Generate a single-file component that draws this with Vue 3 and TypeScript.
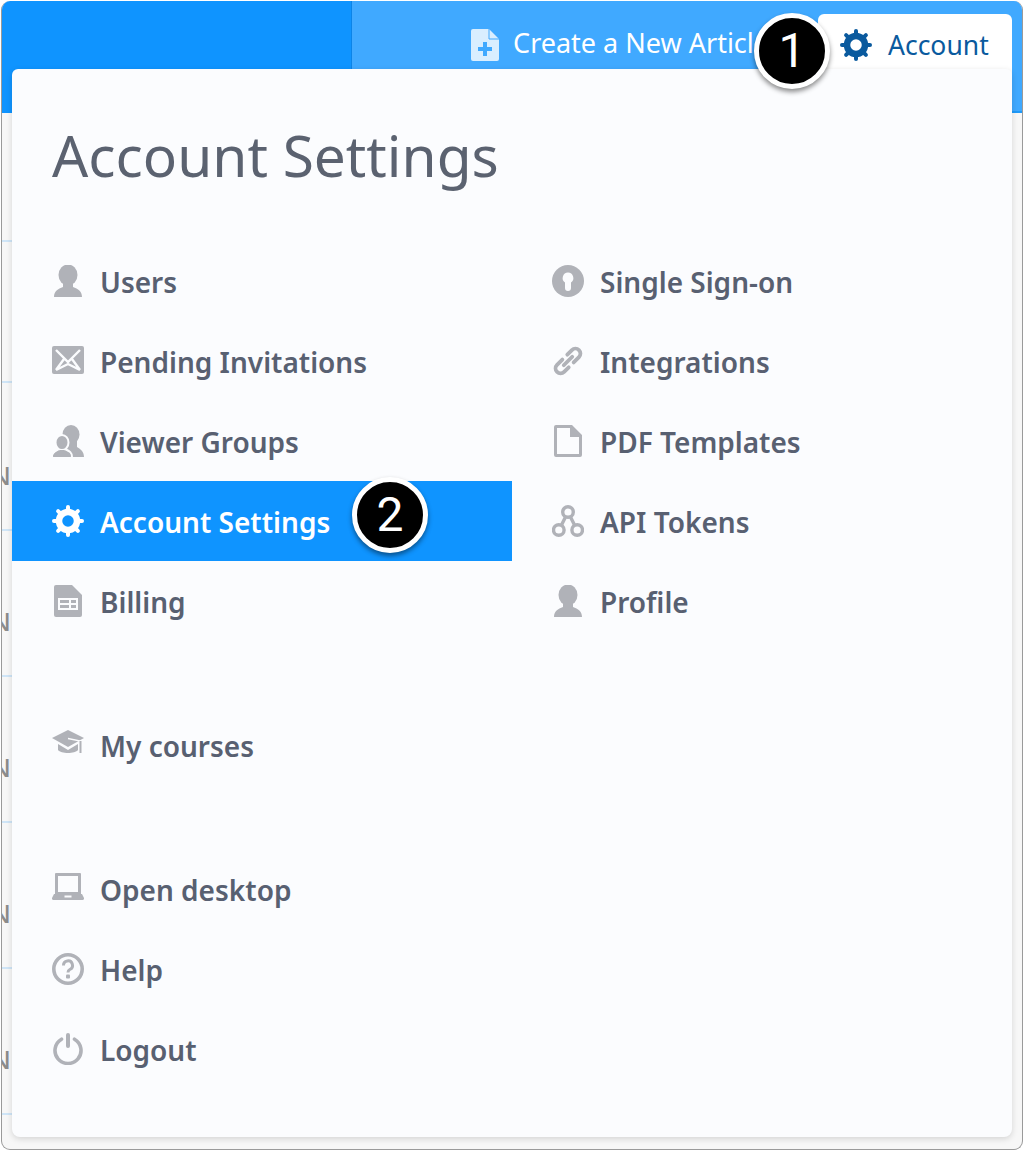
<script setup lang="ts">
interface Item { label: string; icon: string; active?: boolean }

const cut = '#fbfcfe'

function gear(): string {
  let teeth = ''
  for (let i = 0; i < 8; i++) {
    const a = (i * Math.PI) / 4
    const x1 = (16 + 11 * Math.sin(a)).toFixed(2)
    const y1 = (16 - 11 * Math.cos(a)).toFixed(2)
    const x2 = (16 + 14 * Math.sin(a)).toFixed(2)
    const y2 = (16 - 14 * Math.cos(a)).toFixed(2)
    teeth += `<line x1="${x1}" y1="${y1}" x2="${x2}" y2="${y2}" stroke="currentColor" stroke-width="4" stroke-linecap="round"/>`
  }
  return `<circle cx="16" cy="16" r="9" fill="none" stroke="currentColor" stroke-width="6.5"/>${teeth}`
}

const person = `<ellipse cx="16" cy="10" rx="9.5" ry="10.5" fill="currentColor"/><path d="M2 32C2 26 6 24 11 22V17H21V22C26 24 30 26 30 32Z" fill="currentColor"/>`

const icons: Record<string, string> = {
  user: person,
  mail: `<rect x="0" y="1" width="32" height="28" rx="2" fill="currentColor"/><path d="M4 5L16 17L28 5M4 25L12 14M28 25L20 14M4 25L16 19L28 25" fill="none" stroke="${cut}" stroke-width="2.4"/>`,
  group: `<ellipse cx="19" cy="9.500" rx="8.500" ry="9.500" fill="currentColor"/><path d="M12 32V16H25V22C28 24 32 26 32 32Z" fill="currentColor"/><path d="M0 32C0 27 4 26 7 24H13C17 26 20 27 20 32Z" fill="currentColor" stroke="${cut}" stroke-width="2"/><ellipse cx="10" cy="17.500" rx="6.500" ry="7.500" fill="currentColor" stroke="${cut}" stroke-width="2"/><path d="M1 32C1 28 5 27 8 25H12C15 27 19 28 19 32Z" fill="currentColor"/>`,
  gear: gear(),
  bill: `<path d="M4 0H20L30 10V30A2 2 0 0 1 28 32H4A2 2 0 0 1 2 30V2A2 2 0 0 1 4 0Z" fill="currentColor"/><rect x="6" y="13" width="20" height="12" fill="${cut}"/><path d="M8 15H17V18H8ZM19 15H24V18H19ZM8 20H17V23H8ZM19 20H24V23H19Z" fill="currentColor"/>`,
  cap: `<path d="M16 1L32 9L16 18L0 9Z" fill="currentColor"/><path d="M6 15V21C9 25 23 25 26 21V15L16 21Z" fill="currentColor"/><path d="M16 9.500L28.500 12V23" fill="none" stroke="${cut}" stroke-width="1.300"/><path d="M28.500 12V24" stroke="currentColor" stroke-width="2"/>`,
  laptop: `<path d="M4 0H28A1 1 0 0 1 29 1V21H3V1A1 1 0 0 1 4 0ZM6 3V19H26V3Z" fill="currentColor" fill-rule="evenodd"/><path d="M2 21H30L32 25V26A1.500 1.500 0 0 1 30.500 27H1.500A1.500 1.500 0 0 1 0 26V25Z" fill="currentColor"/><rect x="12.500" y="22.500" width="7" height="2" fill="${cut}"/>`,
  help: `<circle cx="16" cy="16" r="14.200" fill="none" stroke="currentColor" stroke-width="3.600"/><path d="M11.500 12.500A4.500 4.500 0 1 1 17.800 16.500C16.500 17.200 16 18 16 19.500" fill="none" stroke="currentColor" stroke-width="3"/><rect x="14" y="21.500" width="4" height="4" rx="1" fill="currentColor"/>`,
  power: `<path d="M9.500 6.200A13 13 0 1 0 22.500 6.200" fill="none" stroke="currentColor" stroke-width="3.600" stroke-linecap="round"/><rect x="14" y="0" width="4" height="15" rx="2" fill="currentColor"/>`,
  sso: `<circle cx="16" cy="16" r="16" fill="currentColor"/><path d="M16 7.500A5.500 5.500 0 0 1 19 17.500V23A3 3 0 0 1 13 23V17.500A5.500 5.500 0 0 1 16 7.500Z" fill="${cut}"/>`,
  link: `<g transform="rotate(-45 16 16)" fill="none" stroke="currentColor" stroke-width="3.800" stroke-linecap="round"><path d="M13 11H5.500A5 5 0 0 0 5.500 21H12"/><path d="M19 21H26.500A5 5 0 0 0 26.500 11H20"/><path d="M10 16H22"/></g>`,
  doc: `<path d="M4 0H20L30 10V30A2 2 0 0 1 28 32H4A2 2 0 0 1 2 30V2A2 2 0 0 1 4 0ZM5 3V29H27V12H18V3Z" fill="currentColor" fill-rule="evenodd"/>`,
  api: `<g fill="none" stroke="currentColor" stroke-width="3.400"><circle cx="16" cy="7" r="5.300"/><circle cx="6.800" cy="25" r="5.300"/><circle cx="25.200" cy="25" r="5.300"/><path d="M13.500 12L9.500 20M18.500 12L22.500 20"/></g>`
}

const groups: Item[][] = [
  [
    { label: 'Users', icon: 'user' },
    { label: 'Pending Invitations', icon: 'mail' },
    { label: 'Viewer Groups', icon: 'group' },
    { label: 'Account Settings', icon: 'gear', active: true },
    { label: 'Billing', icon: 'bill' }
  ],
  [{ label: 'My courses', icon: 'cap' }],
  [
    { label: 'Open desktop', icon: 'laptop' },
    { label: 'Help', icon: 'help' },
    { label: 'Logout', icon: 'power' }
  ]
]

const right: Item[] = [
  { label: 'Single Sign-on', icon: 'sso' },
  { label: 'Integrations', icon: 'link' },
  { label: 'PDF Templates', icon: 'doc' },
  { label: 'API Tokens', icon: 'api' },
  { label: 'Profile', icon: 'user' }
]

const bgRows = [
  { h: 129, n: false },
  { h: 141, n: false },
  { h: 148, n: true },
  { h: 146, n: true },
  { h: 146, n: true },
  { h: 146, n: true },
  { h: 146, n: true }
]
</script>

<template>
  <div class="page">
    <div class="window">
      <header class="hdr">
        <div class="hdr-left"></div>
        <div class="hdr-right">
          <a class="create">
            <svg class="ico" viewBox="0 0 32 32" width="32" height="32">
              <path d="M4 0H20L30 10V30A2 2 0 0 1 28 32H4A2 2 0 0 1 2 30V2A2 2 0 0 1 4 0Z" fill="#d9eeff" />
              <path d="M20 0V10H30" fill="none" stroke="#40a9ff" stroke-width="1" />
              <path d="M14 13H18V18H23V22H18V27H14V22H9V18H14Z" fill="#40a9ff" />
            </svg>
            <span>Create a New Article</span>
          </a>
          <a class="tab">
            <svg class="ico" viewBox="0 0 32 32" width="32" height="32" v-html="icons.gear"></svg>
            <span>Account</span>
          </a>
        </div>
      </header>
      <div class="bg">
        <div v-for="(r, i) in bgRows" :key="i" class="bg-row" :style="{ height: r.h + 'px' }">
          <span v-if="r.n" class="n">N</span>
        </div>
      </div>
    </div>

    <section class="panel">
      <h1 class="title">Account Settings</h1>
      <div class="cols">
        <div class="col">
          <ul v-for="(g, gi) in groups" :key="gi" class="group">
            <li v-for="it in g" :key="it.label" class="row" :class="{ active: it.active }">
              <svg class="ico" viewBox="0 0 32 32" width="32" height="32" v-html="icons[it.icon]"></svg>
              <span>{{ it.label }}</span>
            </li>
          </ul>
        </div>
        <div class="col">
          <ul class="group">
            <li v-for="it in right" :key="it.label" class="row">
              <svg class="ico" viewBox="0 0 32 32" width="32" height="32" v-html="icons[it.icon]"></svg>
              <span>{{ it.label }}</span>
            </li>
          </ul>
        </div>
      </div>
    </section>

    <div class="badge b1">1</div>
    <div class="badge b2">2</div>
  </div>
</template>

<style>
html, body { margin: 0; background: #fff; }
</style>

<style scoped>
.page {
  position: relative;
  width: 1024px;
  height: 1152px;
  overflow: hidden;
  font-family: "Noto Sans", "Open Sans", sans-serif;
}
.window {
  margin: 1px 1px 2px 1px;
  height: 1149px;
  box-sizing: border-box;
  border: 1px solid #9a9a9a;
  border-top: none;
  border-radius: 9px;
  overflow: hidden;
  background: #f7f7f7;
}
.hdr { display: flex; height: 112px; }
.hdr-left {
  width: 349px;
  background: #0f94ff;
  border-right: 1px solid #0b84e8;
}
.hdr-right {
  flex: 1;
  display: flex;
  justify-content: flex-end;
  align-items: flex-start;
  background: #40a9ff;
  border-bottom: 2px solid #1f9af9;
  padding-right: 10px;
}
.create {
  display: flex;
  align-items: center;
  gap: 12px;
  margin-top: 27px;
  color: #fff;
  font-size: 27px;
  white-space: nowrap;
}
.create span { margin-top: -4px; }
.tab {
  display: flex;
  align-items: flex-start;
  gap: 16px;
  width: 194px;
  height: 80px;
  box-sizing: border-box;
  padding: 15px 0 0 22px;
  color: #0a5a9e;
  font-size: 26.5px;
  background: #fff;
  border-radius: 6px 6px 0 0;
  margin-top: 13px;
  margin-left: 49px;
}
.tab span { margin-top: -2px; }
.ico { flex: none; display: block; }
.bg { height: 1034px; }
.bg-row {
  width: 1004px;
  box-sizing: border-box;
  border-bottom: 2px solid #cfe5f7;
  border-right: 2px solid #cfe5f7;
  display: flex;
  align-items: flex-end;
  padding-bottom: 40px;
}
.n {
  width: 9px;
  color: #8c8c8c;
  font-size: 26px;
  font-weight: 500;
  line-height: 28px;
  overflow: hidden;
  direction: rtl;
}
.panel {
  position: absolute;
  left: 12px;
  top: 69px;
  width: 1000px;
  height: 1068px;
  background: #fbfcfe;
  border-radius: 6px 6px 8px 8px;
  box-shadow: 0 2px 6px rgba(0, 0, 0, 0.14);
}
.title {
  margin: 0;
  height: 172px;
  box-sizing: border-box;
  padding: 41px 0 0 40px;
  font-size: 56.8px;
  line-height: 90px;
  font-weight: 400;
  color: #5b6270;
}
.cols { display: grid; grid-template-columns: 500px 500px; }
.group { list-style: none; margin: 0 0 64px; padding: 0; }
.row {
  display: flex;
  align-items: center;
  gap: 16px;
  height: 80px;
  padding-left: 40px;
  font-size: 28px;
  font-weight: 600;
  color: #586071;
}
.row span { margin-top: 2px; }
.row .ico { color: #b0b2b8; }
.row.active { background: #0f94ff; color: #fff; }
.row.active .ico { color: #fff; }
.badge {
  position: absolute;
  width: 76px;
  height: 76px;
  box-sizing: border-box;
  border: 5px solid #fff;
  border-radius: 50%;
  background: #000;
  color: #fff;
  font-family: Roboto, "Liberation Sans", sans-serif;
  font-size: 48px;
  font-weight: 400;
  line-height: 66px;
  text-align: center;
  box-shadow: 0 3px 5px rgba(0, 0, 0, 0.45);
}
.b1 { left: 754px; top: 13px; }
.b2 { left: 352px; top: 477px; }
</style>
